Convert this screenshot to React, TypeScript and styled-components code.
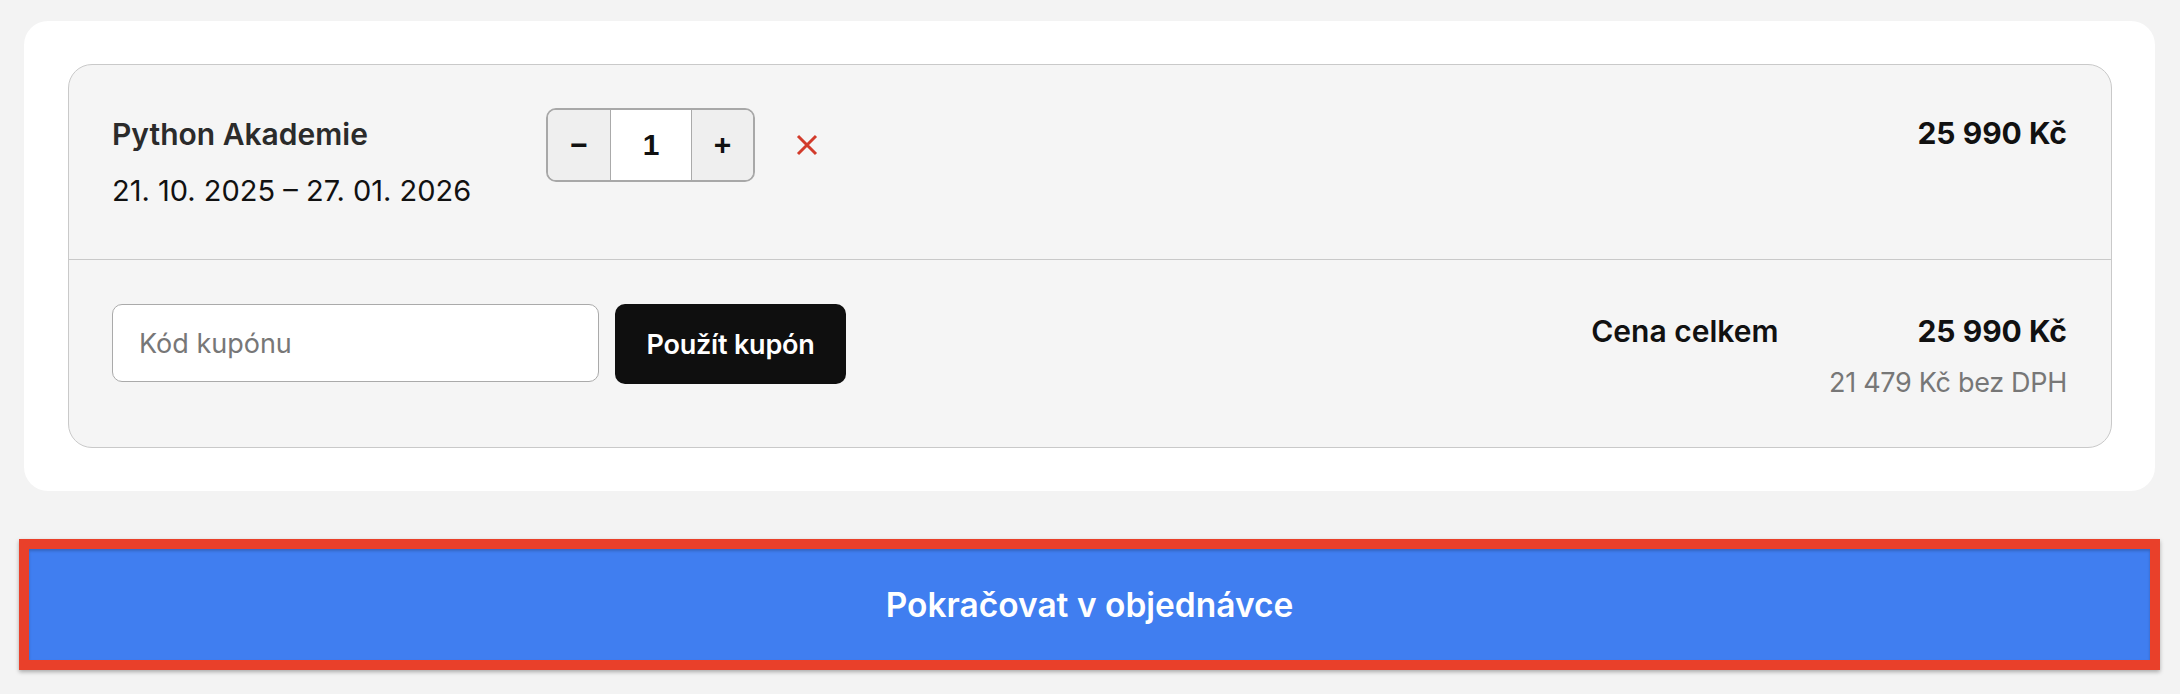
import styled, { createGlobalStyle } from "styled-components";

const GlobalStyle = createGlobalStyle`
  html, body {
    margin: 0;
    background: #f3f3f3;
    font-family: Inter, "Noto Sans", sans-serif;
  }
`;

const cartItem = {
  name: "Python Akademie",
  dates: "21. 10. 2025 – 27. 01. 2026",
  qty: 1,
  price: "25 990 Kč",
};

const CloseIcon = () => (
  <svg width="22" height="22" viewBox="0 0 22 22" fill="none">
    <path d="M2 2L20 20M20 2L2 20" stroke="#d23b2b" strokeWidth="3" />
  </svg>
);

const App = () => {
  return (
    <>
      <GlobalStyle />
      <Page>
        <Card>
          <CartBox>
            <ItemRow>
              <ItemInfo>
                <ItemName>{cartItem.name}</ItemName>
                <ItemDates>{cartItem.dates}</ItemDates>
              </ItemInfo>
              <Stepper>
                <StepButton>−</StepButton>
                <QtyInput value={cartItem.qty} readOnly />
                <StepButton>+</StepButton>
              </Stepper>
              <RemoveButton aria-label="Odebrat">
                <CloseIcon />
              </RemoveButton>
              <ItemPrice>{cartItem.price}</ItemPrice>
            </ItemRow>
            <SummaryRow>
              <CouponForm>
                <CouponInput placeholder="Kód kupónu" />
                <ApplyButton>Použít kupón</ApplyButton>
              </CouponForm>
              <Totals>
                <TotalLabel>Cena celkem</TotalLabel>
                <TotalPrice>25 990 Kč</TotalPrice>
                <NetPrice>21 479 Kč bez DPH</NetPrice>
              </Totals>
            </SummaryRow>
          </CartBox>
        </Card>
        <ContinueButton>Pokračovat v objednávce</ContinueButton>
      </Page>
    </>
  );
};

export default App;

const Page = styled.div`
  padding: 21px 25px 24px 24px;
`;

const Card = styled.div`
  background: #fff;
  border-radius: 24px;
  padding: 43px 43px 43px 44px;
`;

const CartBox = styled.div`
  background: #f5f5f5;
  border: 1px solid #c9c9c9;
  border-radius: 24px;
`;

const ItemRow = styled.div`
  display: flex;
  align-items: flex-start;
  padding: 43px 44px 50px 43px;
  border-bottom: 1px solid #c9c9c9;
`;

const ItemInfo = styled.div`
  width: 434px;
  padding-top: 8px;
`;

const ItemName = styled.div`
  font-size: 30px;
  font-weight: 600;
  line-height: 36px;
  color: #2b2b2b;
`;

const ItemDates = styled.div`
  margin-top: 21px;
  font-size: 29px;
  line-height: 36px;
  color: #111;
`;

const Stepper = styled.div`
  display: flex;
  height: 70px;
  border: 2px solid #a8a8a8;
  border-radius: 10px;
  overflow: hidden;
`;

const StepButton = styled.button`
  width: 62px;
  border: none;
  background: #efefef;
  font-family: "Liberation Sans", Arial, sans-serif;
  font-size: 30px;
  font-weight: 700;
  color: #111;
  padding: 0;
  &:last-child {
    width: 61px;
  }
`;

const QtyInput = styled.input`
  box-sizing: border-box;
  width: 82px;
  border: none;
  border-left: 1px solid #aaa;
  border-right: 1px solid #aaa;
  background: #fff;
  text-align: center;
  font-family: "Liberation Sans", Arial, sans-serif;
  font-size: 30px;
  font-weight: 700;
  color: #111;
  outline: none;
`;

const RemoveButton = styled.button`
  display: flex;
  align-items: center;
  justify-content: center;
  width: 22px;
  height: 74px;
  margin-left: 41px;
  padding: 0;
  border: none;
  background: none;
`;

const ItemPrice = styled.div`
  margin-left: auto;
  padding-top: 7px;
  font-size: 30px;
  font-weight: 700;
  line-height: 36px;
  color: #111;
`;

const SummaryRow = styled.div`
  display: flex;
  align-items: flex-start;
  justify-content: space-between;
  padding: 44px 44px 46px 43px;
`;

const CouponForm = styled.div`
  display: flex;
  align-items: flex-start;
  gap: 16px;
`;

const CouponInput = styled.input`
  box-sizing: border-box;
  width: 487px;
  height: 78px;
  padding: 0 26px;
  border: 1px solid #aaa;
  border-radius: 10px;
  background: #fff;
  font-family: Inter, "Noto Sans", sans-serif;
  font-size: 27px;
  color: #111;
  outline: none;
  &::placeholder {
    color: #777;
  }
`;

const ApplyButton = styled.button`
  width: 231px;
  height: 80px;
  border: none;
  border-radius: 10px;
  background: #0f0f0f;
  color: #fff;
  font-family: Inter, "Noto Sans", sans-serif;
  font-size: 27px;
  font-weight: 600;
  letter-spacing: -0.2px;
`;

const Totals = styled.div`
  display: grid;
  grid-template-columns: auto auto;
  column-gap: 139px;
  row-gap: 16px;
  padding-top: 9px;
  line-height: 36px;
`;

const TotalLabel = styled.div`
  font-size: 30px;
  font-weight: 600;
  color: #111;
`;

const TotalPrice = styled.div`
  text-align: right;
  font-size: 30px;
  font-weight: 700;
  color: #111;
`;

const NetPrice = styled.div`
  grid-column: 1 / span 2;
  text-align: right;
  font-size: 27px;
  color: #777;
  letter-spacing: -0.3px;
`;

const ContinueButton = styled.button`
  display: block;
  box-sizing: border-box;
  width: calc(100% + 10px);
  height: 131px;
  margin: 48px -5px 0;
  border: 10px solid #e9402a;
  background: #407ef0;
  color: #fff;
  font-family: Inter, "Noto Sans", sans-serif;
  font-size: 33.5px;
  font-weight: 600;
  box-shadow: 0 2px 4px rgba(0, 0, 0, 0.3), inset 0 2px 3px rgba(0, 0, 0, 0.2);
`;
